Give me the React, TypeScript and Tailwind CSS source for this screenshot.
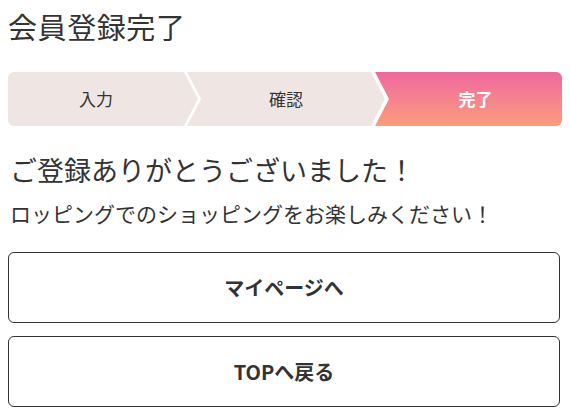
import React from 'react';

const font = { fontFamily: '"Noto Sans CJK JP", "Noto Sans", sans-serif' };

export default function App() {
  return (
    <div className="min-h-screen bg-white text-[#333] px-2" style={font}>
      {/* Title */}
      <h1 className="pt-[6px] text-[29px] leading-[40px] tracking-[0.02em]">会員登録完了</h1>

      {/* Steps */}
      <div className="mt-[26px] flex h-[54px]">
        <div className="w-[190px] flex items-center pr-[14px] bg-[#efe6e4] rounded-l-[6px] [clip-path:polygon(0_0,calc(100%_-_14px)_0,100%_50%,calc(100%_-_14px)_100%,0_100%)]">
          <span className="flex-1 text-center text-[17px]">入力</span>
        </div>
        <div className="w-[198px] -ml-[11px] flex items-center pl-[14px] pr-[14px] bg-[#efe6e4] [clip-path:polygon(0_0,calc(100%_-_14px)_0,100%_50%,calc(100%_-_14px)_100%,0_100%,14px_50%)]">
          <span className="flex-1 text-center text-[17px]">確認</span>
        </div>
        <div className="flex-1 -ml-[10px] flex items-center pl-[14px] rounded-r-[6px] bg-linear-to-b from-[#f0669d] to-[#f99d7b] [clip-path:polygon(0_0,100%_0,100%_100%,0_100%,14px_50%)]">
          <span className="flex-1 text-center text-[17px] font-bold text-white">完了</span>
        </div>
      </div>

      {/* Message */}
      <p className="mt-[26px] text-[27px] leading-[36px] px-[2px]">ご登録ありがとうございました！</p>
      <p className="mt-[10px] text-[21px] leading-[30px] px-[2px]">ロッピングでのショッピングをお楽しみください！</p>

      {/* Buttons */}
      <div className="mt-[24px] flex flex-col gap-[13px] pr-[2px]">
        <button className="h-[71px] border border-[#333] rounded-[6px] bg-white text-[20px] font-bold text-[#333]">
          マイページへ
        </button>
        <button className="h-[71px] border border-[#333] rounded-[6px] bg-white text-[20px] font-bold text-[#333]">
          TOPへ戻る
        </button>
      </div>
    </div>
  );
}
